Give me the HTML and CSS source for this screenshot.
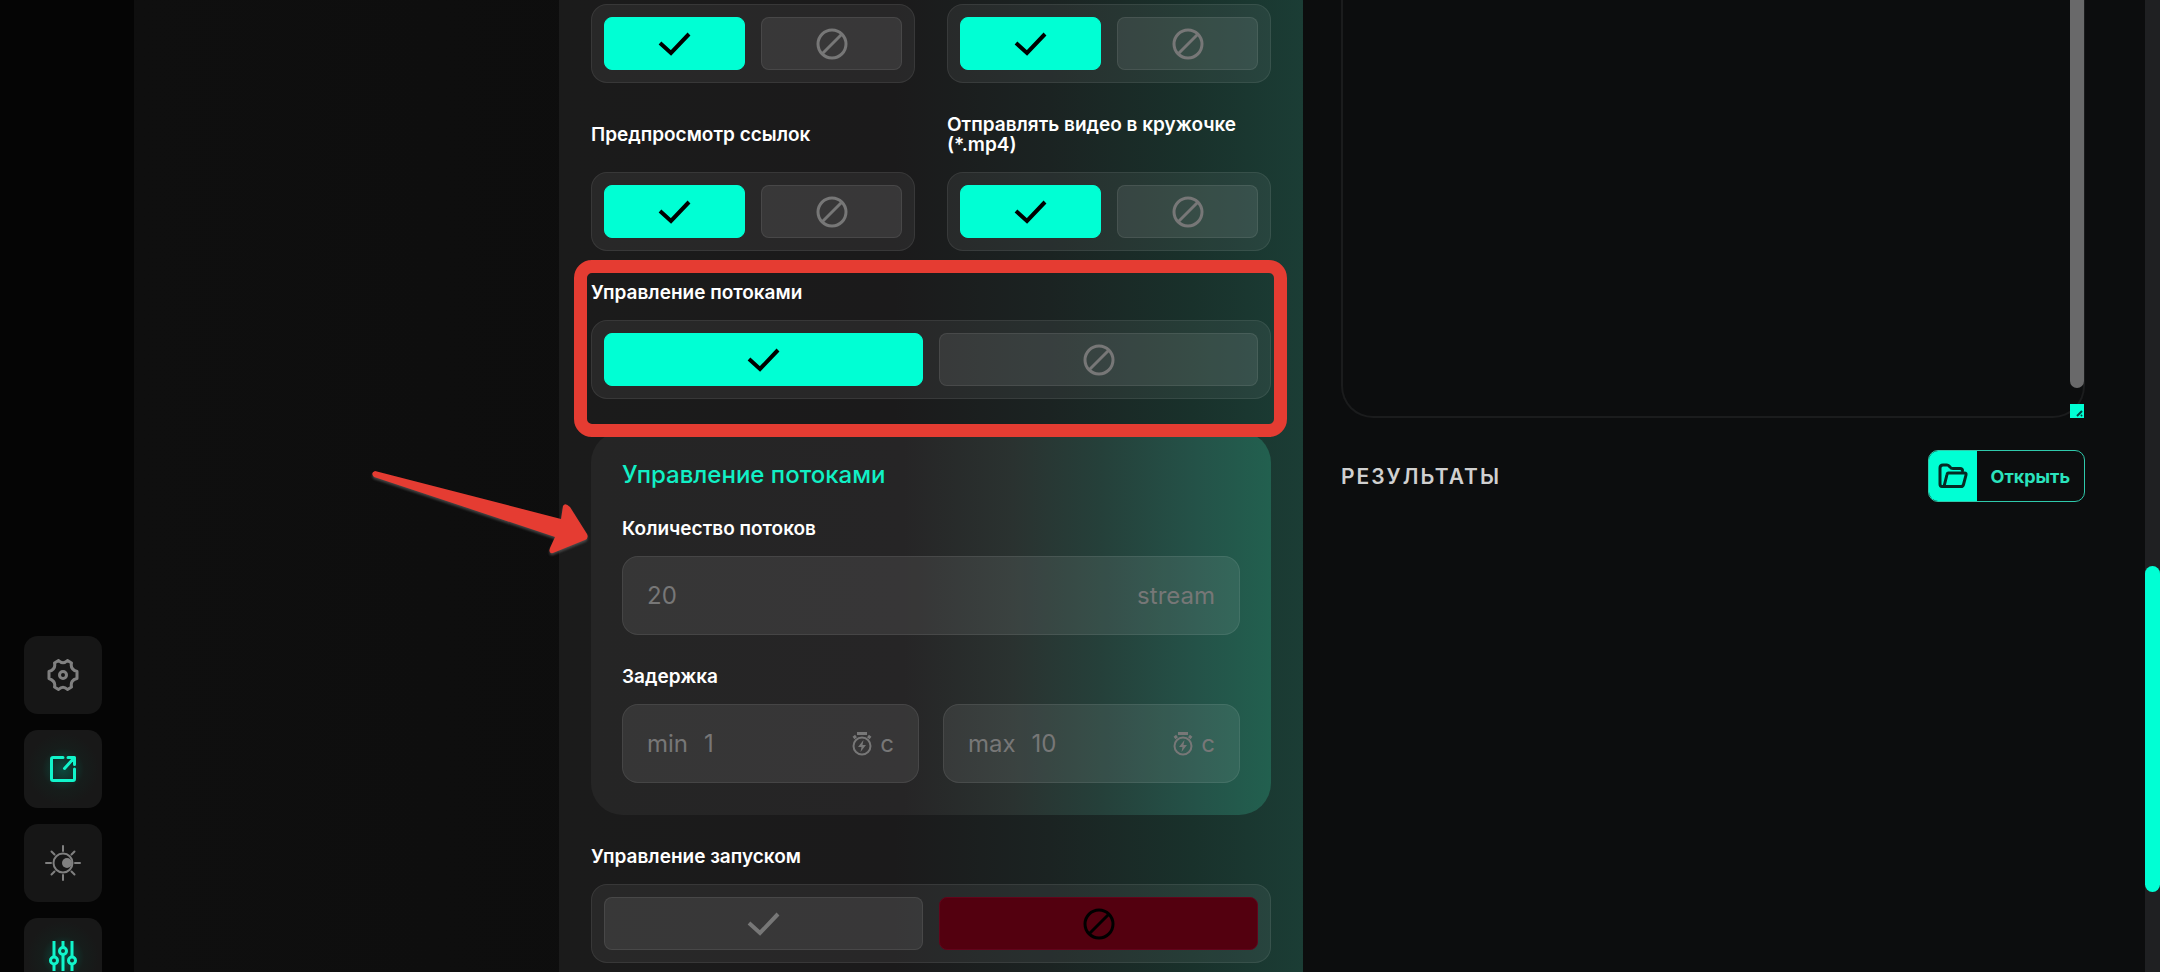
FILE: index.html
```html
<!DOCTYPE html>
<html lang="ru">
<head>
  <meta charset="UTF-8">
  <title>Управление потоками</title>
  <link rel="stylesheet" href="styles.css">
</head>
<body>
  <!-- Shared icons -->
  <svg class="sprite" aria-hidden="true">
    <symbol id="check" viewBox="0 0 36 26">
      <path d="M3 12l11 10L32 3" fill="none" stroke="currentColor" stroke-width="4"/>
    </symbol>
    <symbol id="ban" viewBox="0 0 32 32">
      <g fill="none" stroke="currentColor" stroke-width="3"><circle cx="16" cy="16" r="14"/><path d="M25.500 6.500l-19 19"/></g>
    </symbol>
    <symbol id="timer" viewBox="0 0 20 24">
      <path d="M5 1.500h10M1.500 6l2.500-2M18.500 6L16 4" fill="none" stroke="currentColor" stroke-width="3"/>
      <circle cx="10" cy="14" r="8.500" fill="none" stroke="currentColor" stroke-width="2"/>
      <path d="M11.500 8L6 15h3.500l-1 5L14 13h-3.500z" fill="currentColor"/>
    </symbol>
  </svg>

  <nav class="sidebar">
    <button class="side-btn" aria-label="Настройки">
      <svg width="32" height="32" viewBox="0 0 32 32" fill="none" stroke="currentColor" stroke-width="3" stroke-linejoin="round"><path d="M11.500 1.500Q16 6 20.500 1.500L24.500 4Q23 10 30 12.500V19.500Q23 21 24.500 28L20.500 30.500Q16 26 11.500 30.500L7.500 28Q9 22 2 19.500V12.500Q9 10 7.500 4z"/><circle cx="16" cy="16" r="3.500"/></svg>
    </button>
    <button class="side-btn lit" aria-label="Открыть в новом окне">
      <svg width="28" height="28" viewBox="0 0 28 28" fill="none" stroke="currentColor" stroke-width="3" stroke-linejoin="round" stroke-linecap="round"><path d="M14 2.500H4Q2.500 2.500 2.500 4V24Q2.500 25.500 4 25.500H24Q25.500 25.500 25.500 24V14M15.500 13.500L25 3M19 2.500H25.500V9.500"/></svg>
    </button>
    <button class="side-btn" aria-label="Тема">
      <svg width="36" height="36" viewBox="0 0 36 36" fill="none" stroke="currentColor" stroke-width="2" stroke-linecap="round"><circle cx="18" cy="18" r="9.500"/><path d="M18 1v5M18 30v5M1 18h5M30 18h5M6.500 6.500l3 3M29.500 6.500l-3 3M6.500 29.500l3-3M29.500 29.500l-3-3"/><circle cx="22" cy="18" r="5" fill="currentColor" stroke="none"/></svg>
    </button>
    <button class="side-btn lit" aria-label="Параметры">
      <svg width="28" height="32" viewBox="0 2 28 32" fill="none" stroke="currentColor" stroke-width="3"><path d="M5 2v16M5 25v7M14 2v6M14 15v17M23 2v16M23 25v7"/><circle cx="5" cy="21.500" r="3.500"/><circle cx="14" cy="12" r="3.500"/><circle cx="23" cy="21.500" r="3.500"/></svg>
    </button>
  </nav>

  <main class="page">
    <section class="panel">
      <div class="pair">
        <div class="toggle">
          <button class="opt on" aria-label="Да"><svg class="check"><use href="#check"/></svg></button>
          <button class="opt" aria-label="Нет"><svg class="ban"><use href="#ban"/></svg></button>
        </div>
        <div class="toggle">
          <button class="opt on" aria-label="Да"><svg class="check"><use href="#check"/></svg></button>
          <button class="opt" aria-label="Нет"><svg class="ban"><use href="#ban"/></svg></button>
        </div>
      </div>

      <div class="pair">
        <div class="field" role="group" aria-labelledby="preview">
          <h3 class="label" id="preview">Предпросмотр ссылок</h3>
          <div class="toggle">
            <button class="opt on" aria-label="Да"><svg class="check"><use href="#check"/></svg></button>
            <button class="opt" aria-label="Нет"><svg class="ban"><use href="#ban"/></svg></button>
          </div>
        </div>
        <div class="field" role="group" aria-labelledby="round">
          <h3 class="label" id="round">Отправлять видео в кружочке (*.mp4)</h3>
          <div class="toggle">
            <button class="opt on" aria-label="Да"><svg class="check"><use href="#check"/></svg></button>
            <button class="opt" aria-label="Нет"><svg class="ban"><use href="#ban"/></svg></button>
          </div>
        </div>
      </div>

      <div class="field marked" role="group" aria-labelledby="threads">
        <h3 class="label" id="threads">Управление потоками</h3>
        <div class="toggle">
          <button class="opt on" aria-label="Да"><svg class="check"><use href="#check"/></svg></button>
          <button class="opt" aria-label="Нет"><svg class="ban"><use href="#ban"/></svg></button>
        </div>
      </div>

      <div class="card">
        <h2 class="card-title">Управление потоками</h2>
        <div class="field">
          <label class="label" for="count">Количество потоков</label>
          <div class="input">
            <input id="count" type="text" placeholder="20">
            <span>stream</span>
          </div>
        </div>
        <div class="field" role="group" aria-labelledby="delay">
          <h3 class="label" id="delay">Задержка</h3>
          <div class="delays">
            <div class="input">
              <label for="min">min</label>
              <input id="min" type="text" placeholder="1">
              <svg class="timer"><use href="#timer"/></svg>
              <span>с</span>
            </div>
            <div class="input">
              <label for="max">max</label>
              <input id="max" type="text" placeholder="10">
              <svg class="timer"><use href="#timer"/></svg>
              <span>с</span>
            </div>
          </div>
        </div>
        <svg class="arrow" viewBox="0 0 220 90" aria-hidden="true"><path d="M4 1L190 49L192 36Q194 32 199 37L216 64Q218 68 214 70L182 83Q177 84 179 78L184 67L3 7Q-1 3 4 1z"/></svg>
      </div>

      <div class="field" role="group" aria-labelledby="launch">
        <h3 class="label" id="launch">Управление запуском</h3>
        <div class="toggle">
          <button class="opt" aria-label="Да"><svg class="check"><use href="#check"/></svg></button>
          <button class="opt off" aria-label="Нет"><svg class="ban"><use href="#ban"/></svg></button>
        </div>
      </div>
    </section>

    <section class="output">
      <div class="log">
        <textarea aria-label="Лог"></textarea>
        <div class="log-bar"></div>
        <div class="log-grip"><svg viewBox="0 0 14 14"><path d="M7 12l5-5M11 12l1-1" stroke="#044" stroke-width="2"/></svg></div>
      </div>
      <div class="results">
        <h2 class="results-title">РЕЗУЛЬТАТЫ</h2>
        <button class="open-btn">
          <span class="open-icon"><svg width="30" height="26" viewBox="0 0 30 26" fill="none" stroke="currentColor" stroke-width="3" stroke-linejoin="round" stroke-linecap="round"><path d="M6 23.500H4Q2 23.500 2 21V5Q2 2 5 2H9Q10.500 2 12 4Q13 5.500 15 5.500H22Q24.500 5.500 24.500 7.500M10 10H26.500Q28.500 10 28 12L25.500 21.500Q25 23.500 23 23.500H6L9 11.500Q9.300 10 10 10z"/></svg></span>
          <span class="open-text">Открыть</span>
        </button>
      </div>
    </section>
  </main>

  <div class="scrollbar"><div class="thumb"></div></div>
</body>
</html>
```
FILE: styles.css
```css
* {
  box-sizing: border-box;
}

body {
  margin: 0;
  display: flex;
  height: 100vh;
  overflow: hidden;
  background-color: #0c0d0e;
  color: #fff;
  font-family: Inter, "Open Sans", sans-serif;
}

h2, h3 {
  margin: 0;
}

button, input, textarea {
  font-family: inherit;
  padding: 0;
}

button {
  cursor: pointer;
}

svg {
  flex: none;
}

.sprite {
  position: absolute;
  width: 0;
  height: 0;
}

/* Left icon bar, scrolled past the bottom edge */
.sidebar {
  flex: none;
  width: 134px;
  padding: 636px 0 0 24px;
  display: flex;
  flex-direction: column;
  gap: 16px;
  background-color: #050505;
}

.side-btn {
  flex: none;
  width: 78px;
  height: 78px;
  display: flex;
  align-items: center;
  justify-content: center;
  border: 0;
  border-radius: 14px;
  background-color: #161616;
  color: #808080;
}

.side-btn.lit {
  color: #11f5cb;
  background-image: radial-gradient(circle, #0b4a3e 0, #161d1b 38%, #181818 65%);
}

/* Page columns */
.page {
  flex: 1;
  display: grid;
  grid-template-columns: 744px 1fr;
  gap: 38px;
  padding: 0 60px 0 425px;
  background: linear-gradient(90deg, #0f0f0f 0%, #0d0d0d 30%, #0c0d0e 60%);
}

.panel {
  display: flex;
  flex-direction: column;
  gap: 32px;
  height: 100vh;
  padding: 4px 32px 0;
  background: linear-gradient(90deg, #1b1b1b 0%, #1b1a1b 45%, #1b2322 66%, #19312b 85%, #1b3d35 100%);
}

.pair {
  display: grid;
  grid-template-columns: 1fr 1fr;
  gap: 32px;
}

.field {
  display: flex;
  flex-direction: column;
  gap: 17px;
}

.label {
  flex: 1;
  display: flex;
  align-items: center;
  font-size: 19px;
  font-weight: 600;
  line-height: 20px;
}

/* Yes / no switch */
.toggle {
  display: flex;
  gap: 16px;
  height: 79px;
  padding: 12px;
  border: 1px solid rgba(255, 255, 255, 0.08);
  border-radius: 16px;
  background-color: rgba(255, 255, 255, 0.06);
}

.opt {
  flex: 1;
  display: flex;
  align-items: center;
  justify-content: center;
  border: 1px solid rgba(255, 255, 255, 0.08);
  border-radius: 8px;
  background-color: rgba(255, 255, 255, 0.08);
  color: #777;
}

.opt.on {
  border-color: #00ffd4;
  background-color: #00ffd4;
  color: #000;
}

.opt.off {
  border-color: #62041b;
  background-color: #53000f;
  color: #000;
}

.check {
  width: 36px;
  height: 26px;
}

.ban {
  width: 32px;
  height: 32px;
}

/* Red frame around the highlighted setting */
.marked {
  position: relative;
}

.marked::after {
  content: "";
  position: absolute;
  z-index: 1;
  inset: -23px -16px -38px -17px;
  border: 13px solid #e53c32;
  border-radius: 18px;
  pointer-events: none;
}

.card {
  position: relative;
  display: flex;
  flex-direction: column;
  gap: 32px;
  padding: 32px 31px;
  border-radius: 32px;
  background: linear-gradient(90deg, #252525 0%, #262526 46%, #2a3230 62%, #25403a 75%, #245248 89%, #22604f 100%);
}

.card-title {
  color: #11f0c5;
  font-size: 24px;
  font-weight: 500;
  line-height: 24px;
}

.delays {
  display: grid;
  grid-template-columns: 1fr 1fr;
  gap: 24px;
}

.input {
  display: flex;
  align-items: center;
  gap: 8px;
  min-width: 0;
  height: 79px;
  padding: 0 24px;
  border: 1px solid rgba(255, 255, 255, 0.08);
  border-radius: 16px;
  background-color: rgba(255, 255, 255, 0.08);
  color: #777;
  font-size: 24px;
}

.input input {
  flex: 1;
  min-width: 0;
  border: 0;
  outline: 0;
  background: none;
  color: #777;
  font-size: 24px;
}

.input label + input {
  padding-left: 8px;
}

.input input::placeholder {
  color: #777;
}

.timer {
  width: 20px;
  height: 24px;
}

.arrow {
  position: absolute;
  left: -220px;
  top: 39px;
  width: 220px;
  height: 90px;
  fill: #e53c32;
  filter: drop-shadow(0 2px 1px rgba(120, 120, 120, 0.5));
}

/* Right column */
.output {
  display: flex;
  flex-direction: column;
  gap: 32px;
}

.log {
  position: relative;
  height: 418px;
}

.log textarea {
  display: block;
  width: 100%;
  height: 100%;
  resize: none;
  border: 2px solid #1b1c1d;
  border-top: 0;
  border-radius: 0 0 32px 32px;
  background: none;
  color: #fff;
}

.log-bar {
  position: absolute;
  right: 1px;
  top: 0;
  width: 14px;
  height: 388px;
  border-radius: 0 0 7px 7px;
  background-color: #69696a;
}

.log-grip {
  position: absolute;
  right: 1px;
  bottom: 0;
  width: 14px;
  height: 14px;
  background-color: #00ffd4;
}

.log-grip svg {
  display: block;
}

.results {
  display: flex;
  align-items: center;
  justify-content: space-between;
}

.results-title {
  color: #d0d0d0;
  font-size: 21px;
  font-weight: 600;
  letter-spacing: 2px;
}

.open-btn {
  display: flex;
  height: 52px;
  overflow: hidden;
  border: 1px solid #2fc9ab;
  border-radius: 10px;
  background: none;
  color: #2ae3bd;
  font-size: 18px;
  font-weight: 700;
}

.open-icon {
  display: flex;
  align-items: center;
  justify-content: center;
  width: 48px;
  height: 100%;
  background-color: #00ffd4;
  color: #062a24;
}

.open-text {
  padding: 0 14px;
  align-self: center;
}

/* Page scrollbar */
.scrollbar {
  flex: none;
  width: 15px;
  padding-top: 566px;
  background-color: #1f2022;
}

.thumb {
  height: 326px;
  border-radius: 8px;
  background-color: #00ffd4;
}
```
